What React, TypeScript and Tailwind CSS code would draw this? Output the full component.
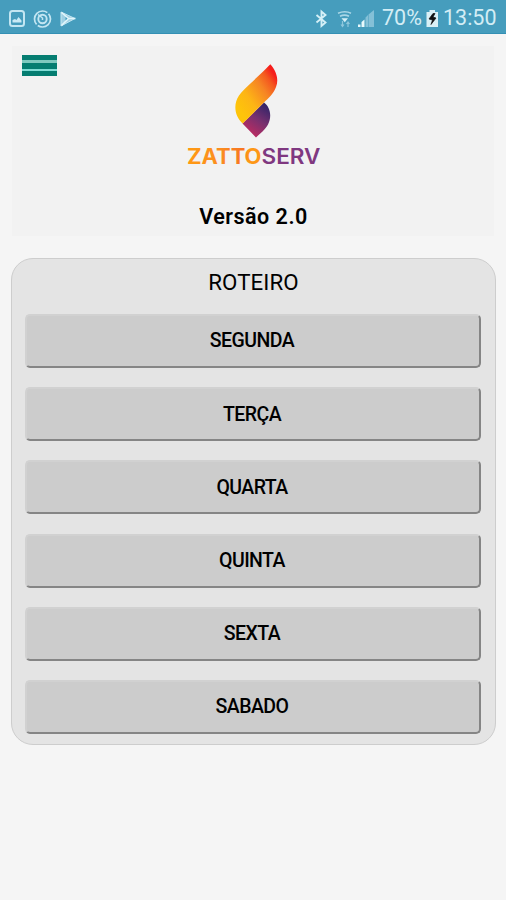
const days = ['SEGUNDA', 'TERÇA', 'QUARTA', 'QUINTA', 'SEXTA', 'SABADO'];

function NotificationIcons() {
  return (
    <svg className="ml-[9px]" width="70" height="20" viewBox="0 0 70 20" fill="none" stroke="#c3e6f2">
      <rect x="1" y="2" width="14" height="15" rx="2.5" strokeWidth="2" />
      <path d="M3.500 13.500v-2.500l2.500-1 1.500 1 2-3 3 3.500v2z" fill="#c9eaf5" stroke="none" />
      <circle cx="33.500" cy="10" r="8" strokeWidth="1.700" strokeDasharray="23.500 1.600" strokeDashoffset="6" />
      <circle cx="33.500" cy="10" r="4.200" strokeWidth="1.900" />
      <path d="M29 5.500l4.500 3.500v2" strokeWidth="1.500" />
      <path d="M52 3v14l14-7.500z" fill="#9fd0e3" strokeWidth="1" strokeLinejoin="round" />
      <path d="M52.500 3.500l7 6-7 7M59.500 9.500h7" stroke="#e2f6fb" strokeWidth="1.600" />
      <path d="M56.500 8l2 1.500-2 2z" fill="#469dbd" stroke="none" />
    </svg>
  );
}

function SignalIcons() {
  return (
    <svg width="64" height="20" viewBox="0 0 64 20" fill="none">
      <path d="M3.500 6l9 7.500-4 3.500V2.500l4 3.500-9 7.500" stroke="#d5f0f7" strokeWidth="1.900" />
      <path d="M25 4.200q7-3 13 0M27 7.200q4.500-2.200 9 0" stroke="#a9d6e6" strokeWidth="1.600" />
      <path d="M28.500 9.200h6.500l-3.200 4z" fill="#d5f0f7" />
      <path d="M29.500 12v6M28 15.500l1.500 2 1.500-2M35 18v-5M33.500 15l1.500-2 1.500 2" stroke="#8fc7dc" strokeWidth="1.200" />
      <path d="M45 18v-2.500h2.500V18zM48.500 18v-5l3-2.500V18z" fill="#e8f9fc" />
      <path d="M52.500 18V8.500l2.500-2.500v12zM55.500 18V5.500L61 1v17z" fill="#84c0d7" />
    </svg>
  );
}

function BatteryIcon() {
  return (
    <svg width="13" height="18" viewBox="0 0 13 18">
      <path d="M3.500 0h5.500v2h3v15H0.500V2h3z" fill="#d9f0f6" />
      <path d="M7 3.500L3 9l3.500 1L5 14.500l5-6.500-3-1 2-3.500z" fill="#111" stroke="#111" strokeWidth="0.700" />
    </svg>
  );
}

function Logo() {
  return (
    <svg width="140" height="106" viewBox="183 62 140 106">
      <defs>
        <linearGradient id="flame" gradientUnits="userSpaceOnUse" x1="238" y1="108" x2="278" y2="80">
          <stop offset="0" stopColor="#fec40a" />
          <stop offset="0.300" stopColor="#fdb515" />
          <stop offset="0.650" stopColor="#f68424" />
          <stop offset="0.850" stopColor="#f4581f" />
          <stop offset="1" stopColor="#f51e1c" />
        </linearGradient>
        <linearGradient id="base" gradientUnits="userSpaceOnUse" x1="250" y1="133" x2="268" y2="107">
          <stop offset="0" stopColor="#b82c62" />
          <stop offset="0.500" stopColor="#78306f" />
          <stop offset="1" stopColor="#352569" />
        </linearGradient>
        <linearGradient id="zatto">
          <stop offset="0" stopColor="#ff9a12" />
          <stop offset="0.450" stopColor="#fb8d20" />
          <stop offset="0.750" stopColor="#f77522" />
          <stop offset="0.820" stopColor="#fd9716" />
          <stop offset="1" stopColor="#fd9716" />
        </linearGradient>
      </defs>
      <path d="M264 102.500C270.500 107 272 117 268 124.500C265.500 129.500 260 133.500 256 137.500L242.500 123.500Z" fill="url(#base)" />
      <path d="M270.300 64.200C276.500 71 279 79.500 276 87C273.500 94 268.500 98 264 102.500L242.700 123.500C234.500 116.500 233 104 239 95.500C241.500 91.500 247 87 251 83C257.500 76.500 265 70 270.300 64.200Z" fill="url(#flame)" />
      <text x="187" y="164" className="font-[Inter] text-[21px] font-bold" fill="url(#zatto)" textLength="74.500" lengthAdjust="spacingAndGlyphs">
        ZATTO
      </text>
      <text x="261.500" y="164" className="font-[Inter] text-[21px] font-semibold" fill="#7f3880" textLength="59" lengthAdjust="spacingAndGlyphs">
        SERV
      </text>
    </svg>
  );
}

export default function App() {
  return (
    <div className="flex h-[900px] w-[506px] flex-col bg-[#f5f5f5] font-[Roboto,sans-serif] text-black">
      <div className="flex h-[34px] shrink-0 items-center border-b border-[#3490b4] bg-[#469dbd] pt-1 text-[21.500px] text-[#d3edf5]">
        <NotificationIcons />
        <div className="ml-auto flex items-center pr-[9px]">
          <SignalIcons />
          <span className="ml-[5px] w-[44px]">70%</span>
          <BatteryIcon />
          <span className="ml-[4px] w-[54px]">13:50</span>
        </div>
      </div>

      <header className="mx-3 mt-3 flex h-[190px] shrink-0 flex-col items-center bg-[#f2f2f2]">
        <button className="mt-[9px] ml-[10px] flex h-[21px] w-[35px] flex-col self-start bg-[#057d71] pt-[5px]" aria-label="Menu">
          <span className="h-[3px] w-full bg-[#7fc9bf]" />
          <span className="mt-[6px] h-[2px] w-full bg-[#80dcd5]" />
        </button>
        <div className="-mt-[14px] pr-[1px]">
          <Logo />
        </div>
        <h1 className="mt-[36px] pl-[1px] text-[21.500px] leading-[26px] font-semibold tracking-[0.500px]">Versão 2.0</h1>
      </header>

      <main className="mr-[10px] ml-[11px] mt-[22px] flex h-[487px] shrink-0 flex-col rounded-[22px] border border-[#cdcdcd] bg-[#e4e4e4] pr-[14px] pl-[13px]">
        <h2 className="mt-[10px] pl-[1px] text-center text-[22.300px] leading-[26px] tracking-[0.100px]">ROTEIRO</h2>
        <div className="mt-[19px] flex flex-col gap-[19.200px]">
          {days.map((day) => (
            <button
              key={day}
              className="h-[54px] rounded-[5px] border-2 border-t-[#d1d1d1] border-r-[#858585] border-b-[#858585] border-l-[#d1d1d1] bg-[#cccccc] pr-[2px] text-[19.500px] font-medium tracking-[-0.550px]"
            >
              {day}
            </button>
          ))}
        </div>
      </main>
    </div>
  );
}
